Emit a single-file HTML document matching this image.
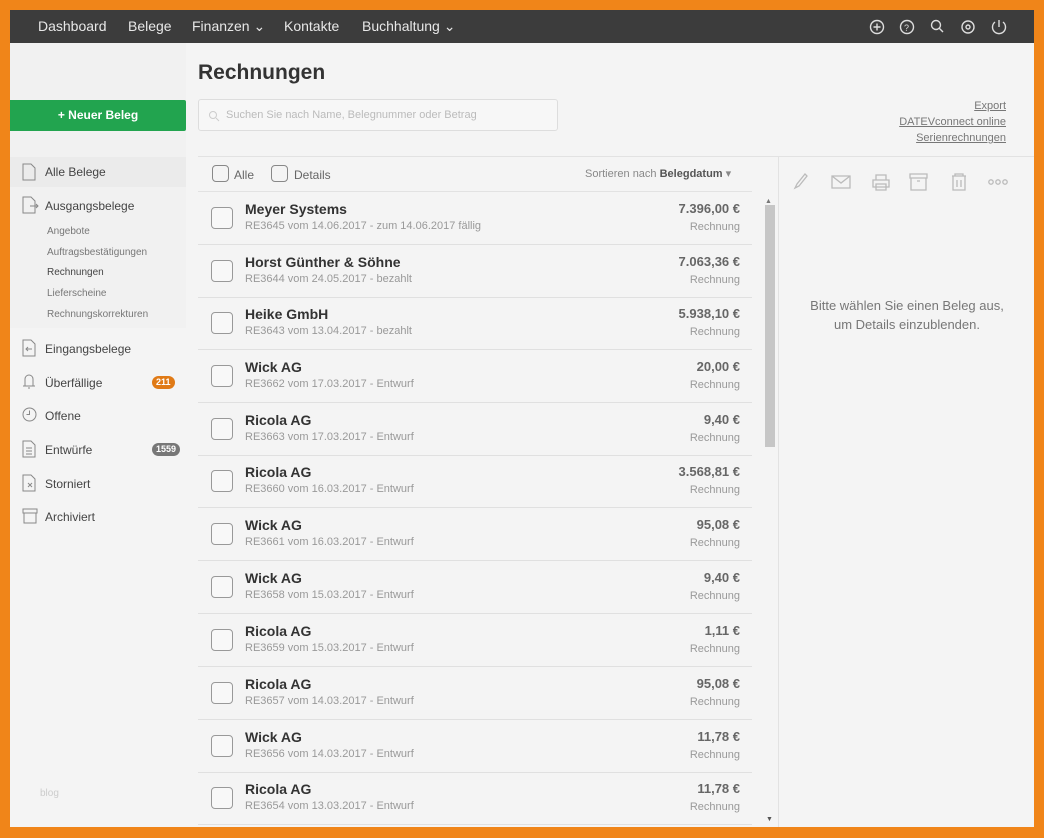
<!DOCTYPE html>
<html><head><meta charset="utf-8"><style>
*{margin:0;padding:0;box-sizing:border-box}
body{width:1044px;height:838px;background:#f08519;font-family:"Liberation Sans",sans-serif;position:relative;overflow:hidden;color:#333}
.app{position:absolute;left:10px;top:10px;width:1024px;height:817px;background:#f4f4f4;overflow:hidden}
.nav{position:absolute;left:0;top:0;width:1024px;height:33px;background:#3c3c3c;color:#e8e8e8;font-size:14px;z-index:5}
.nav span{position:absolute;top:8px}
.side{position:absolute;left:0;top:24px;width:176px;height:793px;background:#f1f1f1}
.btn{position:absolute;left:0;top:66px;width:176px;height:31px;background:#22a44f;color:#fff;font-weight:bold;font-size:12px;text-align:center;line-height:31px;border-radius:0 2px 2px 0}
.si{position:absolute;left:35px;font-size:12px;color:#444}
.sub{position:absolute;left:37px;font-size:10px;color:#777}
.ic{position:absolute;left:12px}
.badge{position:absolute;color:#fff;font-size:9px;font-weight:bold;border-radius:8px;height:13px;line-height:13px;padding:0 4px}
.row{position:absolute;left:188px;width:554px;height:53px;border-bottom:1px solid #e0e0e0}
.cb{position:absolute;left:13px;top:15px;width:22px;height:22px;border:1.5px solid #999;border-radius:4px;background:#f8f8f8}
.nm{position:absolute;left:47px;top:9px;font-size:14px;font-weight:bold;color:#333}
.ds{position:absolute;left:47px;top:28px;font-size:11px;color:#999}
.am{position:absolute;right:12px;top:9px;font-size:13px;font-weight:bold;color:#666}
.ty{position:absolute;right:12px;top:29px;font-size:11px;color:#999}
.lk{position:absolute;right:28px;font-size:11px;color:#777;text-decoration:underline}
</style></head><body>
<div class="app">
<div class="nav">
<span style="left:28px">Dashboard</span><span style="left:118px">Belege</span><span style="left:182px">Finanzen ⌄</span><span style="left:274px">Kontakte</span><span style="left:352px">Buchhaltung ⌄</span>
<svg style="position:absolute;left:858px;top:8px" width="150" height="18" fill="none" stroke="#ddd" stroke-width="1.4">
<circle cx="9" cy="9" r="6.5"/><path d="M9 5.5v7M5.5 9h7"/>
<circle cx="39" cy="9" r="6.5"/><text x="36" y="13" font-size="9" fill="#ddd" stroke="none">?</text>
<circle cx="68" cy="7" r="4.5"/><path d="M71 10l4 4"/>
<circle cx="100" cy="9" r="6"/><circle cx="100" cy="9" r="2"/>
<path d="M127 4a6.5 6.5 0 1 0 8 0M131 2v7"/>
</svg>
</div>
<div class="side">
<div class="btn">+ Neuer Beleg</div>
<div style="position:absolute;left:0;top:123px;width:176px;height:30px;background:#ebebeb"></div>
<svg class="ic" style="top:129px" width="14" height="18" fill="none" stroke="#888"><path d="M1 1h8l4 4v12H1z"/></svg><div class="si" style="top:131px">Alle Belege</div>
<svg class="ic" style="top:162px" width="18" height="18" fill="none" stroke="#888"><path d="M1 1h8l4 4v12H1zM8 10h8M14 8l2 2-2 2"/></svg><div class="si" style="top:165px">Ausgangsbelege</div>
<div class="sub" style="top:192px">Angebote</div>
<div class="sub" style="top:213px">Auftragsbestätigungen</div>
<div class="sub" style="top:233px;color:#444">Rechnungen</div>
<div class="sub" style="top:254px">Lieferscheine</div>
<div class="sub" style="top:275px">Rechnungskorrekturen</div>
<div style="position:absolute;left:0;top:294px;width:176px;height:500px;background:#f4f4f4"></div>
<svg class="ic" style="top:305px" width="14" height="18" fill="none" stroke="#888"><path d="M1 1h8l4 4v12H1zM10 10H4M6 8l-2 2 2 2"/></svg><div class="si" style="top:308px">Eingangsbelege</div>
<svg class="ic" style="top:339px" width="14" height="18" fill="none" stroke="#888"><path d="M3 13V6a4 4 0 0 1 8 0v7zM1 13h12M6 15h2"/></svg><div class="si" style="top:342px">Überfällige</div>
<div class="badge" style="left:142px;top:342px;background:#e07a16">211</div>
<svg class="ic" style="top:373px" width="16" height="16" fill="none" stroke="#888"><circle cx="7.5" cy="7.5" r="6.5"/><path d="M7.5 3.5v4h-3"/></svg><div class="si" style="top:375px">Offene</div>
<svg class="ic" style="top:406px" width="14" height="18" fill="none" stroke="#888"><path d="M1 1h8l4 4v12H1zM4 8h6M4 11h6M4 14h6"/></svg><div class="si" style="top:409px">Entwürfe</div>
<div class="badge" style="left:142px;top:409px;background:#777">1559</div>
<svg class="ic" style="top:440px" width="14" height="18" fill="none" stroke="#888"><path d="M1 1h8l4 4v12H1zM6 9l4 4M10 9l-4 4"/></svg><div class="si" style="top:443px">Storniert</div>
<svg class="ic" style="top:474px" width="16" height="16" fill="none" stroke="#888"><path d="M1 1h14v4H1zM2 5v10h12V5"/></svg><div class="si" style="top:476px">Archiviert</div>
<div style="position:absolute;left:30px;top:754px;font-size:10px;color:#ccc">blog</div>
</div>
<div style="position:absolute;left:188px;top:51px;font-size:21px;font-weight:bold;color:#333">Rechnungen</div>
<div style="position:absolute;left:188px;top:89px;width:360px;height:32px;border:1px solid #ddd;border-radius:3px;background:#f7f7f7;font-size:11px;color:#bbb;padding:9px 0 0 27px">Suchen Sie nach Name, Belegnummer oder Betrag
<svg style="position:absolute;left:9px;top:10px" width="12" height="12" fill="none" stroke="#ccc"><circle cx="5" cy="5" r="3.5"/><path d="M8 8l3 3"/></svg></div>
<div class="lk" style="top:90px">Export</div>
<div class="lk" style="top:106px">DATEVconnect online</div>
<div class="lk" style="top:122px">Serienrechnungen</div>
<div style="position:absolute;left:188px;top:146px;width:836px;border-top:1px solid #e2e2e2"></div>
<div style="position:absolute;left:188px;top:181px;width:554px;border-top:1px solid #e2e2e2"></div>
<div style="position:absolute;left:768px;top:146px;height:671px;border-left:1px solid #e2e2e2"></div>
<div style="position:absolute;left:202px;top:155px;width:17px;height:17px;border:1.5px solid #888;border-radius:4px"></div><div style="position:absolute;left:224px;top:158px;font-size:12px;color:#666">Alle</div>
<div style="position:absolute;left:261px;top:155px;width:17px;height:17px;border:1.5px solid #888;border-radius:4px"></div><div style="position:absolute;left:284px;top:158px;font-size:12px;color:#666">Details</div>
<div style="position:absolute;left:575px;top:157px;font-size:11px;color:#888">Sortieren nach <b style="color:#555">Belegdatum</b> ▾</div>
<svg style="position:absolute;left:782px;top:162px" width="220" height="20" fill="none" stroke="#bbb" stroke-width="1.3">
<path d="M3 16l2-4 8-10 2 2-8 10z"/>
<path d="M40 4h18v12H40zM40 4l9 7 9-7"/>
<path d="M81 8h16v7H81zM84 8V3h10v5M84 12h10v6H84z"/>
<path d="M118 2h17v4h-17zM119 6v12h15V6M125 9h3"/>
<path d="M160 4h14M163 4V2h8v2M161 4v14h12V4M165 8v7M169 8v7"/>
<circle cx="199" cy="10" r="2.2"/><circle cx="206" cy="10" r="2.2"/><circle cx="213" cy="10" r="2.2"/>
</svg>
<div style="position:absolute;left:770px;top:286px;width:254px;text-align:center;font-size:13px;color:#777;line-height:19px">Bitte wählen Sie einen Beleg aus,<br>um Details einzublenden.</div>
<div style="position:absolute;left:755px;top:188px;font-size:7px;color:#777">▲</div>
<div style="position:absolute;left:755px;top:195px;width:10px;height:242px;background:#c6c6c6"></div>
<div style="position:absolute;left:756px;top:806px;font-size:7px;color:#555">▼</div>

<div class="row" style="top:182px"><div class="cb"></div><div class="nm">Meyer Systems</div><div class="ds">RE3645 vom 14.06.2017 - zum 14.06.2017 fällig</div><div class="am">7.396,00 €</div><div class="ty">Rechnung</div></div>
<div class="row" style="top:235px"><div class="cb"></div><div class="nm">Horst Günther &amp; Söhne</div><div class="ds">RE3644 vom 24.05.2017 - bezahlt</div><div class="am">7.063,36 €</div><div class="ty">Rechnung</div></div>
<div class="row" style="top:287px"><div class="cb"></div><div class="nm">Heike GmbH</div><div class="ds">RE3643 vom 13.04.2017 - bezahlt</div><div class="am">5.938,10 €</div><div class="ty">Rechnung</div></div>
<div class="row" style="top:340px"><div class="cb"></div><div class="nm">Wick AG</div><div class="ds">RE3662 vom 17.03.2017 - Entwurf</div><div class="am">20,00 €</div><div class="ty">Rechnung</div></div>
<div class="row" style="top:393px"><div class="cb"></div><div class="nm">Ricola AG</div><div class="ds">RE3663 vom 17.03.2017 - Entwurf</div><div class="am">9,40 €</div><div class="ty">Rechnung</div></div>
<div class="row" style="top:445px"><div class="cb"></div><div class="nm">Ricola AG</div><div class="ds">RE3660 vom 16.03.2017 - Entwurf</div><div class="am">3.568,81 €</div><div class="ty">Rechnung</div></div>
<div class="row" style="top:498px"><div class="cb"></div><div class="nm">Wick AG</div><div class="ds">RE3661 vom 16.03.2017 - Entwurf</div><div class="am">95,08 €</div><div class="ty">Rechnung</div></div>
<div class="row" style="top:551px"><div class="cb"></div><div class="nm">Wick AG</div><div class="ds">RE3658 vom 15.03.2017 - Entwurf</div><div class="am">9,40 €</div><div class="ty">Rechnung</div></div>
<div class="row" style="top:604px"><div class="cb"></div><div class="nm">Ricola AG</div><div class="ds">RE3659 vom 15.03.2017 - Entwurf</div><div class="am">1,11 €</div><div class="ty">Rechnung</div></div>
<div class="row" style="top:657px"><div class="cb"></div><div class="nm">Ricola AG</div><div class="ds">RE3657 vom 14.03.2017 - Entwurf</div><div class="am">95,08 €</div><div class="ty">Rechnung</div></div>
<div class="row" style="top:710px"><div class="cb"></div><div class="nm">Wick AG</div><div class="ds">RE3656 vom 14.03.2017 - Entwurf</div><div class="am">11,78 €</div><div class="ty">Rechnung</div></div>
<div class="row" style="top:762px"><div class="cb"></div><div class="nm">Ricola AG</div><div class="ds">RE3654 vom 13.03.2017 - Entwurf</div><div class="am">11,78 €</div><div class="ty">Rechnung</div></div>
</div>
</body></html>
